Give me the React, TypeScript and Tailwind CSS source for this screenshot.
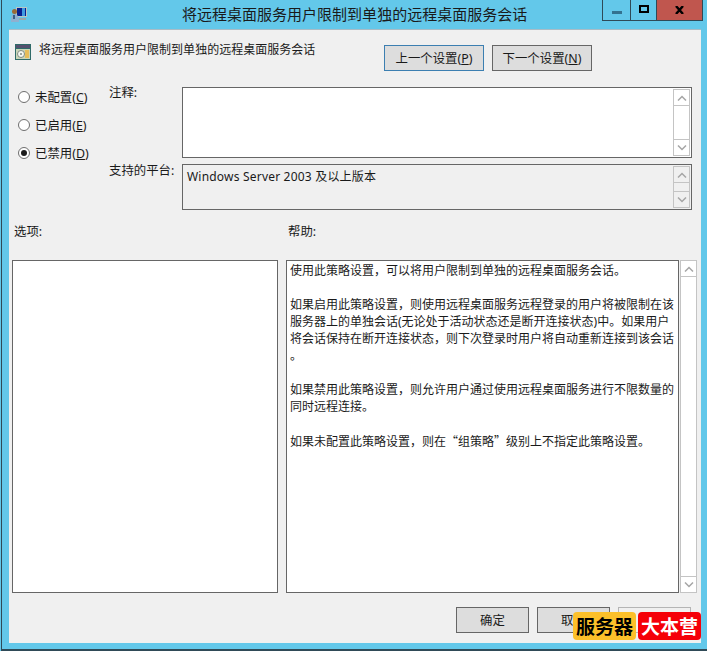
import { ReactNode } from "react";

const font = { fontFamily: '"Noto Sans", "Noto Sans CJK SC", sans-serif' };

const Chevron = ({ up }: { up?: boolean }) => (
    <svg width="10" height="6" viewBox="0 0 10 6" fill="none" stroke="#a6a6a6" strokeWidth="1.5">
        <path d={up ? "M1 5.5 5 1.5 9 5.5" : "M1 .5 5 4.5 9 .5"} />
    </svg>
);

const ScrollBar = ({ className }: { className: string }) => (
    <div className={"flex flex-col justify-between border border-[#c4c4c4] " + className}>
        <div className="h-4 flex items-center justify-center border-b border-[#c4c4c4]"><Chevron up /></div>
        <div className="h-4 flex items-center justify-center border-t border-[#c4c4c4]"><Chevron /></div>
    </div>
);

const Radio = ({ label, hot, checked }: { label: string; hot: string; checked?: boolean }) => (
    <div className="h-[28px] flex items-center gap-[5px] pl-[9px]">
        <span className="w-[12px] h-[12px] rounded-full border border-[#6e6e6e] bg-white flex items-center justify-center">
            {checked && <span className="w-[6px] h-[6px] rounded-full bg-[#1c1c1c]" />}
        </span>
        <span>{label}(<u>{hot}</u>)</span>
    </div>
);

const Button = ({ children, className }: { children: ReactNode; className: string }) => (
    <div className={"h-[26px] flex items-center justify-center border " + className}>{children}</div>
);

const Paragraph = ({ children }: { children: ReactNode }) => <p className="mb-[17px]">{children}</p>;

export default function App() {
    return (
        <div className="relative w-[707px] h-[651px] overflow-hidden bg-[#63c8ea] pl-px text-[12.4px] text-[#1a1a1a] leading-[17px]" style={font}>
            <div className="h-full border-l border-b-2 border-[#2f4a57]">
                {/* title bar */}
                <div className="h-[29px] flex">
                    <svg className="ml-[9px] mt-[7px] shrink-0" width="16" height="16" viewBox="0 0 16 16">
                        <rect x="5" y="0" width="11" height="10" fill="#b9c6c4" />
                        <rect x="6" y="1" width="9" height="8" fill="#08208f" />
                        <rect x="11" y="1" width="3" height="8" fill="#3f9ae0" />
                        <rect x="8" y="11" width="7" height="2" fill="#9aa7a8" />
                        <circle cx="3.5" cy="4.5" r="2.5" fill="#9a6a36" />
                        <path d="M0 15c0-6 1-8 3.5-8S8 9 8 15z" fill="#8fb0cf" />
                        <rect x="2" y="8" width="2" height="4" fill="#3a5f86" />
                    </svg>
                    <div className="ml-[155px] flex-1 text-[15px] tracking-[.01px] leading-[29px] whitespace-nowrap">将远程桌面服务用户限制到单独的远程桌面服务会话</div>
                    <div className="mr-[4px] h-[21px] flex border border-t-0 border-[#2f4a57]">
                        <div className="w-[28px] flex items-center justify-center border-r border-[#2f4a57]"><span className="mt-[5px] w-[10px] h-[3px] bg-[#33728f]" /></div>
                        <div className="w-[26px] flex items-center justify-center border-r border-[#2f4a57]"><span className="mb-[3px] w-[10px] h-[8px] border-2 border-black" /></div>
                        <div className="w-[45px] bg-[#c0564e] flex items-center justify-center">
                            <svg width="9" height="8" viewBox="0 0 9 8" fill="none" stroke="black" strokeWidth="2.4"><path d="M1 0 8 8M8 0 1 8" /></svg>
                        </div>
                    </div>
                </div>

                {/* dialog body */}
                <div className="ml-[7px] w-[692px] h-[614px] bg-[#f0f0f0] border-t border-[#a9bcc6]">
                    <div className="flex h-[57px]">
                        <svg className="ml-[6px] mt-[14px] shrink-0" width="16" height="16" viewBox="0 0 16 16">
                            <rect width="16" height="16" fill="#2f6a68" />
                            <rect x="1" y="1" width="14" height="3" fill="#54506e" />
                            <rect x="1" y="5" width="14" height="10" fill="#c9d6b8" />
                            <circle cx="6" cy="10" r="3.5" fill="#f4f6f0" stroke="#7f8a80" />
                            <circle cx="6" cy="10" r="1" fill="#7f8a80" />
                            <rect x="10" y="6" width="4" height="8" fill="#e6bd5a" />
                        </svg>
                        <div className="ml-[8px] mt-[11px] w-[345px] text-[12px] tracking-[.01px] whitespace-nowrap">将远程桌面服务用户限制到单独的远程桌面服务会话</div>
                        <div className="mt-[15px] flex gap-[8px]">
                            <Button className="w-[100px] border-[#3c7fb1] bg-[#dddddd]">上一个设置(<u>P</u>)</Button>
                            <Button className="w-[100px] border-[#666666] bg-[#dddddd]">下一个设置(<u>N</u>)</Button>
                        </div>
                    </div>

                    <div className="flex h-[123px]">
                        <div className="w-[100px] -mt-[4px]"><Radio label="未配置" hot="C" /><Radio label="已启用" hot="E" /><Radio label="已禁用" hot="D" checked /></div>
                        <div className="w-[73px] flex flex-col -mt-[3px]">
                            <div className="h-[78px]">注释:</div>
                            <div>支持的平台:</div>
                        </div>
                        <div className="w-[510px] flex flex-col gap-[6px]">
                            <div className="h-[72px] border border-[#666666] bg-white flex justify-end p-px">
                                <ScrollBar className="w-[17px] bg-white" />
                            </div>
                            <div className="h-[46px] border border-[#666666] flex justify-between pl-[4px]">
                                <span className="mt-[3px] text-[12px] tracking-[.2px]">Windows Server 2003 及以上版本</span>
                                <ScrollBar className="w-[17px] my-px mr-px" />
                            </div>
                        </div>
                    </div>

                    <div className="flex h-[50px] pt-[13px]">
                        <div className="w-[279px] pl-[5px]">选项:</div>
                        <div>帮助:</div>
                    </div>

                    <div className="flex h-[333px] pl-[3px]">
                        <div className="w-[266px] border border-[#666666] bg-white" />
                        <div className="ml-[8px] w-[393px] border border-[#666666] bg-white pl-[3px] pt-px text-[12px] whitespace-nowrap">
                            <Paragraph>使用此策略设置，可以将用户限制到单独的远程桌面服务会话。</Paragraph>
                            <Paragraph>
                                如果启用此策略设置，则使用远程桌面服务远程登录的用户将被限制在该<br />
                                服务器上的单独会话(无论处于活动状态还是断开连接状态)中。如果用户<br />
                                将会话保持在断开连接状态，则下次登录时用户将自动重新连接到该会话<br />
                                。
                            </Paragraph>
                            <Paragraph>
                                如果禁用此策略设置，则允许用户通过使用远程桌面服务进行不限数量的<br />
                                同时远程连接。
                            </Paragraph>
                            <Paragraph>
                                如果未配置此策略设置，则在<span className="font-['Noto_Sans_CJK_SC']">“</span>组策略<span className="font-['Noto_Sans_CJK_SC']">”</span>级别上不指定此策略设置。
                            </Paragraph>
                        </div>
                        <ScrollBar className="ml-px w-[17px] bg-white" />
                    </div>

                    <div className="flex justify-end gap-[8px] pt-[14px] pr-[10px]">
                        <Button className="w-[73px] border-[#666666] bg-[#dddddd]">确定</Button>
                        <Button className="w-[73px] border-[#666666] bg-[#dddddd]">取消</Button>
                        <Button className="w-[73px] border-[#b5b5b5] text-[#9a9a9a]">应用</Button>
                    </div>
                </div>
            </div>

            {/* watermark */}
            <div className="absolute left-[573px] top-[612px] flex gap-[2px] text-[19px] leading-[28px] font-bold font-['Noto_Sans_CJK_SC']">
                <span className="w-[63px] h-[28px] rounded-[4px] bg-[#fcc02a] text-black text-center">服务器</span>
                <span className="w-[63px] h-[28px] rounded-[4px] bg-[#f50008] text-white text-center">大本营</span>
            </div>
        </div>
    );
}
